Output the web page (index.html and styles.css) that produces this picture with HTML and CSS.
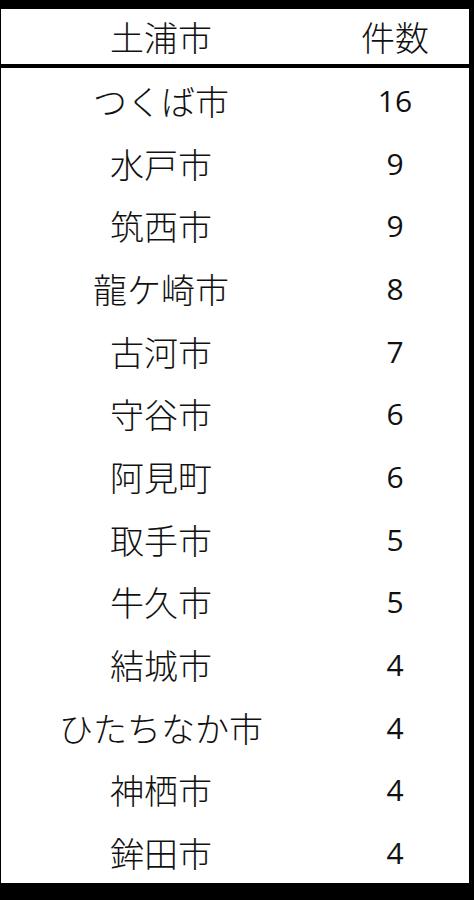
FILE: index.html
```html
<!DOCTYPE html>
<html lang="ja">

<head>
  <meta charset="UTF-8" />
  <meta name="viewport" content="width=device-width, initial-scale=1.0" />
  <title>市町村別件数</title>
  <link rel="stylesheet" href="styles.css">
</head>

<body>
  <div class="sheet">
    <div class="row head">
      <div class="name">土浦市</div>
      <div class="count">件数</div>
    </div>

    <div class="rows">
      <div class="row"><div class="name">つくば市</div><div class="count num">16</div></div>
      <div class="row"><div class="name">水戸市</div><div class="count num">9</div></div>
      <div class="row"><div class="name">筑西市</div><div class="count num">9</div></div>
      <div class="row"><div class="name">龍ケ崎市</div><div class="count num">8</div></div>
      <div class="row"><div class="name">古河市</div><div class="count num">7</div></div>
      <div class="row"><div class="name">守谷市</div><div class="count num">6</div></div>
      <div class="row"><div class="name">阿見町</div><div class="count num">6</div></div>
      <div class="row"><div class="name">取手市</div><div class="count num">5</div></div>
      <div class="row"><div class="name">牛久市</div><div class="count num">5</div></div>
      <div class="row"><div class="name">結城市</div><div class="count num">4</div></div>
      <div class="row"><div class="name">ひたちなか市</div><div class="count num">4</div></div>
      <div class="row"><div class="name">神栖市</div><div class="count num">4</div></div>
      <div class="row"><div class="name">鉾田市</div><div class="count num">4</div></div>
    </div>
  </div>
</body>

</html>
```

FILE: styles.css
```css
body {
  margin: 0;
  background-color: #000;
  font-family: "Noto Sans CJK JP", "Noto Sans", sans-serif;
  font-weight: 300;
  color: #111;
}

.sheet {
  padding: 9px 5px 17px 1px;
  display: flex;
  flex-direction: column;
  gap: 4px;
}

.row {
  display: flex;
  align-items: center;
  background-color: #fff;
  font-size: 34px;
}

.head {
  height: 55px;
}

.rows {
  display: flex;
  flex-direction: column;
  height: 815px;
  background-color: #fff;
}

.rows .row {
  flex: 1;
  padding-top: 2px;
}

.name {
  width: 320px;
  text-align: center;
}

.count {
  flex: 1;
  text-align: center;
}

.num {
  font-family: "Open Sans", sans-serif;
  font-weight: 400;
  font-size: 30px;
}
```
